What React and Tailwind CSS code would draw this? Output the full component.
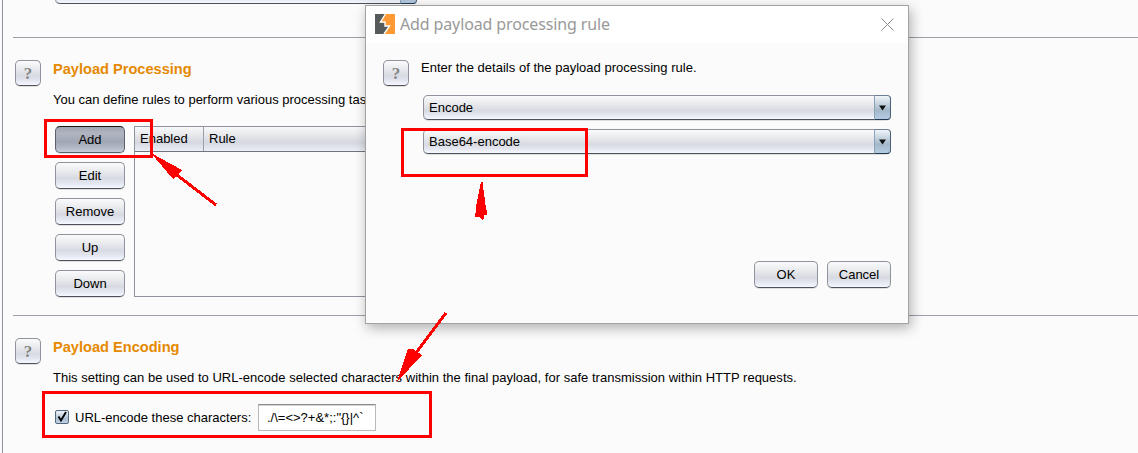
import React from "react";

const plain =
  "rounded-[5px] border border-[#8f949c] border-b-[#4d525b] bg-[linear-gradient(to_bottom,#fbfbfc_0%,#ebecef_30%,#d7dae1_62%,#e4e7f0_82%,#f6f8ff_100%)] shadow-[0_1px_0_#dededf]";

function HelpButton() {
  return (
    <button className={`flex h-[26px] w-[26px] shrink-0 items-center justify-center font-['Liberation_Serif',serif] text-[17px] leading-none font-bold text-[#858585] ${plain}`}>
      ?
    </button>
  );
}

function Button({ children, width = "w-[70px]", pressed = false }) {
  const look = pressed
    ? "rounded-[5px] border border-[#5b616c] border-t-[#14161a] bg-[linear-gradient(to_bottom,#9ea4b1_0%,#b0b5c0_25%,#a0a6b4_60%,#b3bac8_85%,#c6cedd_100%)] shadow-[0_1px_0_#e2e2e4]"
    : plain;
  return (
    <button className={`flex h-[27px] shrink-0 items-center justify-center pt-px ${width} ${look}`}>
      {children}
    </button>
  );
}

function Combo({ children }) {
  return (
    <div className={`flex h-[25px] w-[468px] pl-[5px] ${plain}`}>
      <span className="flex-1 leading-[23px]">{children}</span>
      <ComboArrow />
    </div>
  );
}

function ComboArrow() {
  return (
    <span className="-my-px -mr-px flex w-[17px] justify-center rounded-r-[4px] border border-[#4a6079] border-t-[#6b8096] border-b-[#24394f] border-l-[#8ba3b8] bg-[linear-gradient(to_bottom,#f1f5f8_0%,#c4d2de_35%,#a4b8ca_62%,#b4cbe2_100%)]">
      <svg className="mt-[9px] h-[6px] w-[7px]" viewBox="0 0 7 6">
        <path d="M0 0.5h7L3.5 5.5z" fill="#111" />
      </svg>
    </span>
  );
}

function Heading({ children }) {
  return <h2 className="text-[14.6px] leading-[18px] font-bold text-[#e58900]">{children}</h2>;
}

function Dialog() {
  return (
    <div className="absolute top-[5px] left-[365px] flex h-[319px] w-[544px] flex-col border border-[#a2a2a2] bg-[#fbfbfb] shadow-[2px_4px_12px_rgba(0,0,0,0.3)]">
      <div className="flex h-[37px] shrink-0 items-center bg-white pr-[14px] pl-[9px]">
        <svg className="-mt-[1px] h-[20px] w-[20px]" viewBox="0 0 20 20">
          <rect width="20" height="20" fill="#575a5b" />
          <path d="M10.500 0H20V20H9L14.500 12H10V8.500H5.500z" fill="#ff9933" />
          <path d="M10.500 0L5.500 8H10V12H14.500L9 20" fill="none" stroke="#fff" strokeWidth="1.400" />
        </svg>
        <span className="-mt-[2px] ml-[5px] flex-1 font-['Noto_Sans','Open_Sans',sans-serif] text-[16px] leading-[22px] tracking-[-0.008em] text-[#999]">
          Add payload processing rule
        </span>
        <svg className="-mt-[1px] h-[13px] w-[13px]" viewBox="0 0 13 13">
          <path d="M0.5 0.5l12 12M12.5 0.5l-12 12" stroke="#8b8b8b" />
        </svg>
      </div>
      <div className="flex flex-1 flex-col justify-between pt-[17px] pr-[17px] pb-[35px] pl-[17px]">
        <div className="flex gap-[12px]">
          <HelpButton />
          <div>
            <p className="leading-[16px] tracking-[0.02px]">Enter the details of the payload processing rule.</p>
            <div className="mt-[19px] ml-[2px] flex flex-col gap-[9px]">
              <Combo>Encode</Combo>
              <Combo>Base64-encode</Combo>
            </div>
          </div>
        </div>
        <div className="flex justify-end gap-[9px]">
          <Button width="w-[64px]">OK</Button>
          <Button width="w-[64px]">Cancel</Button>
        </div>
      </div>
    </div>
  );
}

function Annotations() {
  return (
    <svg className="pointer-events-none absolute inset-0 h-[453px] w-[1138px]" viewBox="0 0 1138 453" shapeRendering="crispEdges">
      <g fill="none" stroke="#f00" strokeWidth="3">
        <rect x="45.5" y="120.5" width="106" height="36" />
        <rect x="402.5" y="129.500" width="184" height="46" />
        <rect x="43.5" y="392.5" width="387" height="44" />
        <path d="M216 205L177 175M446 313L416 353" />
      </g>
      <g fill="#f00">
        <path d="M151 153L182 170L173 179z" />
        <path d="M481 182h1.500L486 209v1h1v5h-3v3l-1 2h-1l-2-3h-5v-4h1v-6z" />
        <path d="M397 382L408 349h5l9 6z" />
      </g>
    </svg>
  );
}

export default function App() {
  return (
    <div className="relative h-[453px] w-[1138px] overflow-hidden bg-[#fbfbfb] font-['Liberation_Sans',Arial,sans-serif] text-[13px] text-black">
      <main className="ml-[2px] flex h-full flex-col border-l border-[#8e939d] pl-[10px]">
        <div className="ml-[42px] h-[4px] w-[362px] shrink-0 overflow-hidden">
          <div className="-mt-[21px] h-[25px] w-[362px]">
            <div className={`flex h-[25px] w-full justify-end ${plain}`}>
              <ComboArrow />
            </div>
          </div>
        </div>

        <section className="mt-[33px] flex h-[278px] shrink-0 gap-[12px] border-t border-[#9b9fa8] pt-[22px] pl-[2px]">
          <HelpButton />
          <div>
            <Heading>Payload Processing</Heading>
            <p className="mt-[14px] leading-[16px] whitespace-nowrap">
              You can define rules to perform various processing tas
            </p>
            <div className="mt-[18px] ml-[2px] flex gap-[9px]">
              <div className="flex w-[70px] flex-col gap-[9px]">
                <Button pressed>Add</Button>
                <Button>Edit</Button>
                <Button>Remove</Button>
                <Button>Up</Button>
                <Button>Down</Button>
              </div>
              <div className="h-[171px] w-[500px] border border-[#8e939d]">
                <div className="flex h-[25px] border-b border-[#6f747e] bg-[linear-gradient(to_bottom,#f9f9fb_0%,#e6e7eb_35%,#d5d8e0_65%,#eceef5_100%)] leading-[24px]">
                  <span className="w-[69px] border-r border-[#9ba0aa] pl-[5px]">Enabled</span>
                  <span className="pl-[5px]">Rule</span>
                </div>
              </div>
            </div>
          </div>
        </section>

        <section className="flex flex-1 gap-[12px] border-t border-[#9b9fa8] pt-[22px] pl-[2px]">
          <HelpButton />
          <div>
            <Heading>Payload Encoding</Heading>
            <p className="mt-[14px] leading-[16px] tracking-[0.014px] whitespace-nowrap">
              This setting can be used to URL-encode selected characters within the final payload, for safe transmission within HTTP requests.
            </p>
            <div className="mt-[18px] ml-[2px] flex items-center">
              <span className="-mt-[2px] flex h-[14px] w-[14px] items-center justify-center rounded-[2px] border border-[#536980] bg-[linear-gradient(to_bottom,#f0f4f8,#a9bfd3_65%,#c0d4e6)]">
                <svg className="h-[12px] w-[12px]" viewBox="0 0 12 12">
                  <path d="M2.500 5.500L5 9.500L10 1" fill="none" stroke="#000" strokeWidth="1.900" />
                </svg>
              </span>
              <span className="ml-[6px] w-[183px] whitespace-nowrap">URL-encode these characters:</span>
              <span className="h-[27px] w-[118px] border border-[#b9b9b9] border-t-[#8b8b8b] bg-white pl-[8px] leading-[25px] shadow-[inset_0_1px_0_#d5d5d5]">
                {'./\\=<>?+&*;:"{}|^`'}
              </span>
            </div>
          </div>
        </section>
      </main>
      <Dialog />
      <Annotations />
    </div>
  );
}
